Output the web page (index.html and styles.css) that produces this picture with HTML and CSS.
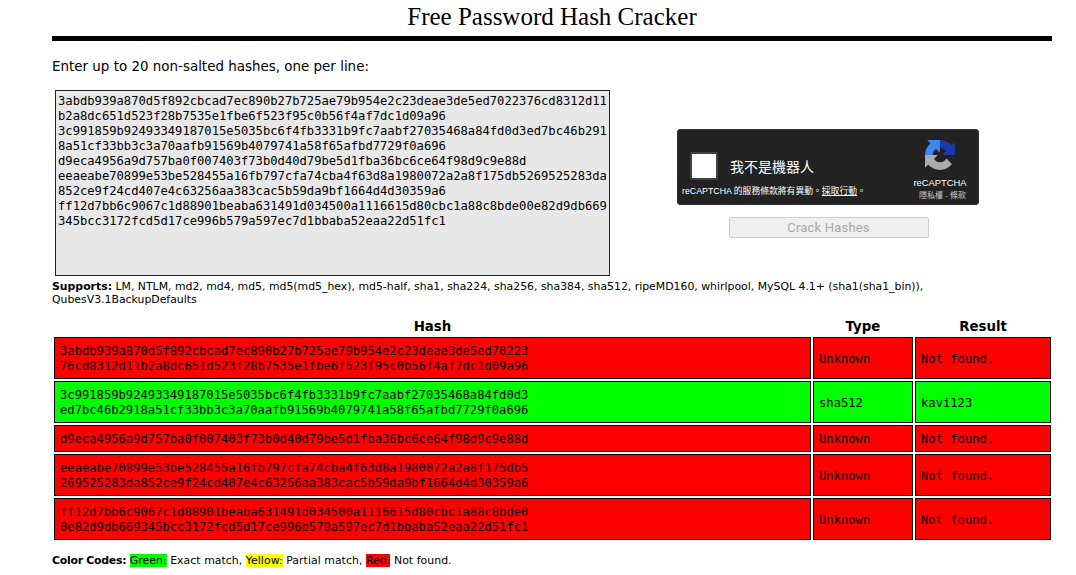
FILE: index.html
```html
<!DOCTYPE html>
<html lang="en">
<head>
<meta charset="utf-8">
<title>Free Password Hash Cracker</title>
<link rel="stylesheet" href="styles.css">
</head>
<body>
<main class="page">
  <h1 class="title">Free Password Hash Cracker</h1>
  <hr class="rule">
  <p class="intro">Enter up to 20 non-salted hashes, one per line:</p>
  <form class="crack-form">
    <textarea class="hashes" spellcheck="false">3abdb939a870d5f892cbcad7ec890b27b725ae79b954e2c23deae3de5ed7022376cd8312d11b2a8dc651d523f28b7535e1fbe6f523f95c0b56f4af7dc1d09a96
3c991859b92493349187015e5035bc6f4fb3331b9fc7aabf27035468a84fd0d3ed7bc46b2918a51cf33bb3c3a70aafb91569b4079741a58f65afbd7729f0a696
d9eca4956a9d757ba0f007403f73b0d40d79be5d1fba36bc6ce64f98d9c9e88d
eeaeabe70899e53be528455a16fb797cfa74cba4f63d8a1980072a2a8f175db5269525283da852ce9f24cd407e4c63256aa383cac5b59da9bf1664d4d30359a6
ff12d7bb6c9067c1d88901beaba631491d034500a1116615d80cbc1a88c8bde00e82d9db669345bcc3172fcd5d17ce996b579a597ec7d1bbaba52eaa22d51fc1</textarea>
    <div class="side">
      <div class="captcha">
        <div class="captcha-main">
          <div class="check-row">
            <span class="checkbox"></span>
            <span class="robot">我不是機器人</span>
          </div>
          <div class="notice">reCAPTCHA 的服務條款將有異動。<a class="notice-link" href="#">採取行動</a>。</div>
        </div>
        <div class="brand">
          <svg class="logo" viewBox="0 0 64 64" aria-hidden="true">
            <path fill="#1c3aa9" d="M64 31.955l-.033-1.37V4.687l-7.16 7.16C50.948 4.674 42.033.093 32.05.093c-10.4 0-19.622 4.96-25.458 12.64l11.736 11.86a15.55 15.55 0 0 1 4.754-5.334c2.05-1.6 4.952-2.906 8.968-2.906.485 0 .86.057 1.135.163 4.976.393 9.288 3.14 11.827 7.124l-8.307 8.307c10.522-.04 22.4-.066 27.295.005"/>
            <path fill="#4285f4" d="M31.862.094l-1.37.033H4.594l7.16 7.16C4.58 13.147 0 22.06 0 32.046c0 10.4 4.96 19.622 12.64 25.458L24.5 45.768a15.55 15.55 0 0 1-5.334-4.754c-1.6-2.05-2.906-4.952-2.906-8.968 0-.485.057-.86.163-1.135.393-4.976 3.14-9.288 7.124-11.827l8.307 8.307c-.04-10.522-.066-22.4.005-27.295"/>
            <path fill="#ababab" d="M0 32.045l.005 1.368v25.9l7.16-7.16c5.86 7.173 14.774 11.754 24.76 11.754 10.4 0 19.622-4.96 25.458-12.64l-11.736-11.86a15.55 15.55 0 0 1-4.754 5.334c-2.004 1.6-4.907 2.906-8.923 2.906-.485 0-.86-.057-1.135-.163-4.976-.393-9.288-3.14-11.827-7.124l8.307-8.307C21.3 32.052 9.4 32.1 0 32.045"/>
          </svg>
          <div class="brand-name">reCAPTCHA</div>
          <div class="brand-links">隱私權 - 條款</div>
        </div>
      </div>
      <button class="crack" type="button" disabled>Crack Hashes</button>
    </div>
  </form>
  <p class="supports"><b>Supports:</b> LM, NTLM, md2, md4, md5, md5(md5_hex), md5-half, sha1, sha224, sha256, sha384, sha512, ripeMD160, whirlpool, MySQL 4.1+ (sha1(sha1_bin)), QubesV3.1BackupDefaults</p>
  <table class="results">
    <thead>
      <tr><th class="col-hash">Hash</th><th class="col-type">Type</th><th class="col-result">Result</th></tr>
    </thead>
    <tbody>
      <tr class="miss"><td>3abdb939a870d5f892cbcad7ec890b27b725ae79b954e2c23deae3de5ed70223<br>76cd8312d11b2a8dc651d523f28b7535e1fbe6f523f95c0b56f4af7dc1d09a96</td><td>Unknown</td><td>Not found.</td></tr>
      <tr class="hit"><td>3c991859b92493349187015e5035bc6f4fb3331b9fc7aabf27035468a84fd0d3<br>ed7bc46b2918a51cf33bb3c3a70aafb91569b4079741a58f65afbd7729f0a696</td><td>sha512</td><td>kavi123</td></tr>
      <tr class="miss"><td>d9eca4956a9d757ba0f007403f73b0d40d79be5d1fba36bc6ce64f98d9c9e88d</td><td>Unknown</td><td>Not found.</td></tr>
      <tr class="miss"><td>eeaeabe70899e53be528455a16fb797cfa74cba4f63d8a1980072a2a8f175db5<br>269525283da852ce9f24cd407e4c63256aa383cac5b59da9bf1664d4d30359a6</td><td>Unknown</td><td>Not found.</td></tr>
      <tr class="miss"><td>ff12d7bb6c9067c1d88901beaba631491d034500a1116615d80cbc1a88c8bde0<br>0e82d9db669345bcc3172fcd5d17ce996b579a597ec7d1bbaba52eaa22d51fc1</td><td>Unknown</td><td>Not found.</td></tr>
    </tbody>
  </table>
  <p class="codes"><b class="codes-label">Color Codes:</b> <span class="swatch green">Green:</span> Exact match, <span class="swatch yellow">Yellow:</span> Partial match, <span class="swatch red">Red:</span> Not found.</p>
</main>
</body>
</html>
```
FILE: styles.css
```css
html, body { margin: 0; padding: 0; background: #fff; color: #000; overflow: hidden; }
body { height: 575px; font-family: "DejaVu Sans", sans-serif; }
.page { width: 1000px; margin-left: 52px; }
.title { margin: 0; height: 36px; font: 400 25px/34px "Liberation Serif", serif; text-align: center; }
.rule { margin: 0; height: 5px; border: 0; background: #000; }
.intro { margin: 18px 0 0; font-size: 13.44px; line-height: 16px; }
.crack-form { display: flex; margin: 15px 0 0 3px; height: 186px; }
.hashes { box-sizing: border-box; width: 555px; height: 186px; padding: 3px 2px; border: 1px solid #222; background: #e8e8e8; color: #000; font: 12.16px/15px "DejaVu Sans Mono", monospace; resize: none; overflow: hidden; outline: 0; border-radius: 0; }
.side { display: flex; flex-direction: column; align-items: center; width: 302px; margin: 39px 0 0 67px; }
.captcha { box-sizing: border-box; display: flex; justify-content: space-between; width: 302px; height: 76px; background: #222; border: 1px solid #333; border-radius: 3px; color: #fff; font-family: "Liberation Sans", "Noto Sans CJK TC", sans-serif; }
.captcha-main { display: flex; flex-direction: column; padding: 22px 0 0 4px; }
.check-row { display: flex; align-items: center; margin-left: 8px; gap: 12px; }
.checkbox { box-sizing: border-box; width: 28px; height: 28px; background: #fff; border: 2px solid #444; border-radius: 2px; }
.robot { font-size: 14px; }
.notice { margin-top: 6px; font-size: 8.8px; line-height: 11px; white-space: nowrap; }
.notice-link { color: #fff; text-decoration: underline; }
.brand { display: flex; flex-direction: column; align-items: center; width: 72px; padding: 10px 2px 0 0; }
.logo { display: block; width: 30px; height: 30px; }
.brand-name { margin-top: 7px; font-size: 9.4px; line-height: 11px; }
.brand-links { margin: 3px 0 0 5px; font-size: 8px; line-height: 10px; color: #ccc; }
.crack { box-sizing: border-box; width: 200px; height: 21px; margin: 12px 0 0 1px; padding: 0; background: #efefef; border: 1px solid #ccc; border-radius: 2px; color: #a8a8a8; font: 13px/19px Roboto, sans-serif; letter-spacing: .2px; }
.supports { margin: 4px 0 0; font-size: 10.88px; line-height: 13px; }
.results { width: 1001px; margin-top: 12px; border-collapse: separate; border-spacing: 2px; table-layout: fixed; }
.results th { padding: 0 0 1px; font-size: 13.33px; line-height: 14px; font-weight: 700; }
.col-type { width: 100px; }
.col-result { width: 136px; }
.results td { box-sizing: border-box; padding: 6px 5px 4px; border: 1px solid #000; font: 12.16px/15px "DejaVu Sans Mono", monospace; }
.miss td { background: #f00; }
.hit td { background: #0f0; }
.codes { margin: 12px 0 0; font-size: 10.88px; line-height: 14px; letter-spacing: .05px; }
.codes-label { letter-spacing: -.25px; }
.swatch { color: #000; }
.green { background: #0f0; }
.yellow { background: #ff0; }
.red { background: #f00; }
```
